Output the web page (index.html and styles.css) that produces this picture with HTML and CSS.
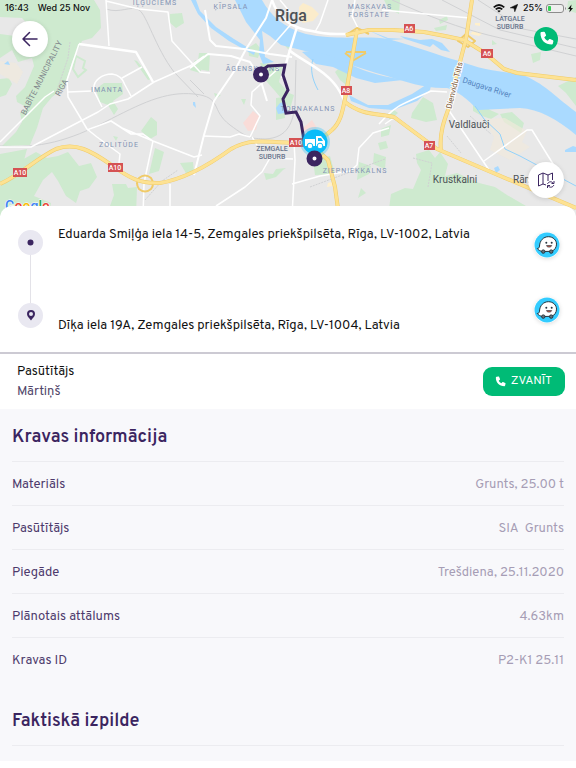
FILE: index.html
```html
<!DOCTYPE html>
<html lang="lv">
<head>
<meta charset="utf-8">
<meta name="viewport" content="width=device-width, initial-scale=1">
<title>Kravas informācija</title>
<link rel="stylesheet" href="styles.css">
</head>
<body>
<svg class="defs" aria-hidden="true">
  <symbol id="phone" viewBox="0 0 24 24"><path d="M5.200 1.600 8.800 1c.7-.1 1.200.2 1.500.8l1.700 4.200c.2.600.1 1.100-.4 1.500L9.400 9.300c1.200 2.500 3 4.300 5.400 5.400l1.800-2.200c.4-.5.9-.6 1.500-.4l4.200 1.800c.6.300.9.800.8 1.400l-.9 3.900c-.2.700-.6 1.100-1.300 1.100C10.300 20.300 3.700 13.500 3.700 3c0-.8.700-1.200 1.500-1.400Z"/></symbol>
  <symbol id="waze" viewBox="0 0 26 26">
    <circle cx="13" cy="13" r="12.500" fill="#33ccff"/>
    <path d="M8.500 19.500c-2.300-.4-4.200-1.400-5.300-3 1.700-.1 2.200-.9 2.300-2.400C5.700 8.500 9.600 4.700 14.400 4.700c4.800 0 8.100 3.500 8.100 7.400 0 3.200-1.800 5.900-4.500 7.200Z" fill="#fff" stroke="#263640" stroke-width="1"/>
    <circle cx="12.300" cy="10.700" r="1" fill="#263640"/><circle cx="17.700" cy="10.700" r="1" fill="#263640"/>
    <path d="M12.500 13.600c.5 2 4.500 2 5.200 0Z" fill="#e0604c" stroke="#263640" stroke-width=".7"/>
    <circle cx="9.300" cy="19.600" r="1.700" fill="#66737b" stroke="#263640"/><circle cx="17.200" cy="19.600" r="1.700" fill="#66737b" stroke="#263640"/>
  </symbol>
</svg>

<header class="map">
  <svg class="map-canvas" viewBox="0 0 576 216" preserveAspectRatio="xMidYMid slice" role="img" aria-label="Riga">
    <rect width="576" height="216" fill="#e8e8e8"/>
    <g fill="#ceeacf">
      <path d="M0 0H94L100 10 101 28 92 38 82 41 72 62 64 88 52 97 43 108 37 128 30 145 2 146 16 132 22 122 20 113 28 108 17 102 16 96 25 87 34 66 32 58 18 62 12 50 0 58V34L15 36 30 27 22 18 0 17Z"/>
      <path d="M0 79 9 78 12 84 6 95 0 97ZM0 154 27 149 23 164 11 180 0 183ZM22 160 36 152 47 158 58 156 68 152 79 166 91 163 97 177 89 188 80 191 76 203 66 196 58 181 52 172 43 180 34 196 51 203 49 216 0 216V186L14 178ZM170 14 182 13 184 23 176 28 169 22ZM195 60 204 62 200 73 190 70ZM112 184 126 184 128 188 137 187 136 216 124 213 110 206 114 195ZM155 148 164 152 159 171 149 174ZM180 163 193 162 194 172 187 175ZM199 53 210 53 209 71 197 69ZM96 89 104 83 122 83 123 94 113 101 118 109 114 115 108 105 100 102ZM113 136 118 137 116 141ZM134 60 137 61 152 79 148 80ZM141 131 151 117 157 122 157 135 150 139Z"/>
      <path d="M260 63 283 65 279 82 289 93 294 95 290 109 275 91 267 82ZM276 98 283 97 285 118 276 120ZM248 48 256 43 261 49 258 58 249 56ZM340 67 347 68 351 89 340 80 335 72ZM313 160 330 156 335 174 315 175ZM359 162 371 166 369 174 357 180ZM374 153 386 157 385 169 373 164ZM381 129 391 125 389 135 381 137ZM286 168 276 169 273 174 264 173 266 180 276 177 283 170ZM384 0 400 0 399 14 388 8ZM278 38 283 35 292 46 288 49ZM241 99 246 99 244 105ZM361 188 366 193 358 198ZM214 93 221 95 216 99Z"/>
      <path d="M412 113 423 97 433 103 437 120 426 122 411 118ZM416 154 429 150 435 158 440 152 448 164 445 176 457 173 479 183 495 187 507 195 526 206 520 216 388 216 391 194 405 188 413 189 421 170 417 163ZM387 114 394 110 398 113 390 120ZM378 143 386 141 388 148 380 150ZM473 102 480 108 484 104 490 110 499 114 491 119 482 116 473 111ZM500 114 512 112 524 123 521 133 504 122ZM558 86 576 77 576 106 566 93ZM531 54 541 52 540 60 533 63ZM434 28 447 25 446 30 436 31ZM439 20 447 16 448 20 440 24ZM492 40 497 44 492 45ZM568 1 576 0 576 13 567 10Z"/>
    </g>
    <path d="M76 56 85 61 83 68 86 70 78 77 73 69Z" fill="none" stroke="#ceeacf" stroke-width="2"/>
    <g fill="#f1eadb" opacity=".65"><path d="M0 61 16 63 23 72 17 84 0 74ZM483 119 505 118 527 131 522 142 530 147 510 160 490 150 494 137Z"/></g>
    <path d="M299 7 303 3 312 7 319 14 313 21 303 23 299 18Z" fill="#fbeccb"/>
    <path d="m243 123 10-12 6 5-3 14-8 1Zm59 6 10-9 5 8-10 9Z" fill="#f9dcd8"/>
    <path d="m328 183 3-1 2 4-6 1ZM473 31l10 2-4 3-9-2Zm2-8 5 0 0 3-5-1Z" fill="#fff0cc"/>
    <g fill="#aadaff">
      <path d="M235 0H262C270 15 284 28 306 34 340 41 364 35 388 39 418 47 437 55 459 61 480 69 499 72 521 74 545 84 552 94 576 112V135C557 119 539 109 520 108L478 110C467 99 458 91 447 88 427 89 406 82 387 76 355 67 332 58 309 52L281 45 270 36 262 31 265 57 274 62 263 64 259 54 260 40 246 22Z"/>
      <path d="M302 52C322 49 342 62 363 70 390 80 419 81 432 82L430 90 417 101 393 110 369 108 351 101 349 95 368 105 388 105 412 94 429 83 403 80 375 83 356 78 333 67 316 64Z"/>
      <path d="m370 31 18 7 17 1-5-3 20 4 12-1 10 4 8 9-9-2-8-6-3 3-25-8-16 1-15-7ZM280 103l4-1 1 11-7 1-2-6ZM191 0h5l4 11 16 16 18 12 21 13-1 3-25-14-18-13-13-14ZM4 64l4-3 2 4ZM518 79l5-2 0 4ZM565 150l8-4 3 1v5l-11 0ZM494 168l4-2 2 4-4 3ZM193 102l2 0 1 6-3-3Z"/>
    </g>
    <g fill="none" stroke="#d0d1d3" stroke-width="1">
      <path d="M0 146C40 149 70 140 105 122S165 91 194 94 210 110 230 125 252 138 265 139C288 138 293 122 295 105L296 60"/>
      <path d="M106 9C120 14 131 5 139 10S155 47 174 72L198 97M392 0C430 17 460 28 488 35L576 56M442 0 500 30 576 48M190 80 204 94M478 0 523 29 576 39"/>
      <path d="M70 42 68 58 56 93M310 187 385 159M145 200 162 181 178 170M447 136 461 153M470 116 491 134M428 187 432 163 413 158" stroke-dasharray="2 1"/>
    </g>
    <g fill="none" stroke="#92d2fb" stroke-width="1"><path d="m475 106 9 13 16 15 5 15 15 7 56 30M313 59c-3 10-1 20 5 31"/></g>
    <g fill="none" stroke="#fff" stroke-width="1.500" stroke-linejoin="round">
      <path d="M0 142 45 97 54 91M0 147H31L98 112 110 104 128 99 154 82 190 66 204 56"/>
      <path d="M106 0 109 46M106 1 139 9 168 12 172 41 200 72 210 73"/>
      <path d="m79 44 57 8 17 30" stroke-width="2.500"/>
      <path d="M79 44 67 80 68 97 80 117 87 129 97 137 120 154 119 163M68 92 92 91M102 107 94 91C92 80 103 74 112 74 120 75 123 79 125 85L131 96M122 78l20-11M87 130 111 121 122 128 153 141 194 157 202 155M111 121 131 134 143 134 153 141 144 183 143 216M170 184V216"/>
      <path d="M190 68 208 54 231 56 250 62 260 78 267 101M205 10 210 40 216 46 244 49 270 54 292 57M272 0 266 18 246 49 235 70 214 101 204 135 194 175" stroke-width="2"/>
      <path d="M203 136 230 137 239 134 250 137 260 116 251 105 252 92 279 68M252 137 257 145M294 142 295 160 292 216M216 206 245 187 262 172 270 158 293 159M292 184 320 176 350 171 357 165 359 148 373 133 389 128"/>
      <path d="M297 27 289 53 282 78" stroke-width="2.500"/>
      <path d="M272 0C278 19 294 29 312 31 330 36 345 34 355 33M289 50C300 60 328 70 340 92L346 104" stroke-width="2.500"/>
      <path d="M328 0 320 23 315 32M355 0 352 16 358 28M280 0 290 12M382 10 470 18"/>
      <path d="M379 124C386 116 395 107 405 103L431 91 447 92M385 124 395 117M448 109 491 173M484 161 527 130 532 130 558 172M293 22 265 54"/>
    </g>
    <g fill="none" stroke="#f0cb69" stroke-width="4" stroke-linejoin="round">
      <path d="M0 184C20 175 37 158 56 149 76 142 91 151 110 164 129 178 140 184 160 183 185 179 209 165 231 149 248 139 264 141 292 143M310 148 332 130C342 121 343 107 345 99L357 30M345 102C363 116 376 113 394 117L437 149 491 172 576 208M313 146 328 160 335 187 339 216M346 35 369 30 393 30 424 32 445 36 464 40 485 53 504 69 517 73 576 80M472 0 466 39 456 77 450 105C444 120 439 134 441 151"/>
      <path d="M139 178q6-5 12 0 4 6 0 11-6 5-12 0-4-6 0-11Zm207-143 11-7 12 6m-24 19 9 7 12-7M346 52h20M458 41l8-7 9 7-7 6Z" stroke-width="2"/>
    </g>
    <path d="M0 184C20 175 37 158 56 149 76 142 91 151 110 164 129 178 140 184 160 183 185 179 209 165 231 149 248 139 264 141 292 143M310 148 332 130C342 121 343 107 345 99L357 30M345 102C363 116 376 113 394 117L437 149 491 172 576 208M313 146 328 160 335 187 339 216M346 35 369 30 393 30 424 32 445 36 464 40 485 53 504 69 517 73 576 80M472 0 466 39 456 77 450 105C444 120 439 134 441 151" fill="none" stroke="#fde293" stroke-width="3"/>

    <g class="district">
      <text x="155" y="5">IĻĢUCIEMS</text><text x="231" y="9">ĶĪPSALA</text>
      <text x="370" y="9">MASKAVAS</text><text x="369" y="17">FORŠTATE</text>
      <text x="107" y="92">IMANTA</text><text x="119" y="147">ZOLITŪDE</text>
      <text x="253" y="71">ĀGENSKALNS</text><text x="308" y="111">TORNAKALNS</text>
      <text x="355" y="173">ZIEPNIEKKALNS</text>
    </g>
    <g class="suburb">
      <text x="272" y="151">ZEMGALE</text><text x="272" y="159">SUBURB</text>
      <text x="510" y="21">LATGALE</text><text x="510" y="29">SUBURB</text>
    </g>
    <g class="town">
      <text x="291" y="21" class="city">Riga</text>
      <text x="469" y="128">Valdlauči</text><text x="455" y="183">Krustkalni</text><text x="531" y="183">Rāmava</text>
    </g>
    <g class="border-label">
      <text transform="translate(44 79) rotate(-63)">BABĪTE MUNICIPALITY</text>
      <text transform="translate(64 89) rotate(-62)">RIGA</text>
    </g>
    <text class="bridge" transform="translate(457 86) rotate(-76)">Dienvidu Tilts</text>
    <text class="river" transform="translate(486 90) rotate(18)">Daugava River</text>
    <g fill="#d55253">
      <rect x="13" y="168" width="14" height="9"/><rect x="108" y="163" width="15" height="9"/><rect x="289" y="138" width="15" height="9"/><rect x="341" y="86" width="11" height="9"/><rect x="404" y="24" width="11" height="9"/><rect x="481" y="49" width="12" height="9"/><rect x="424" y="141" width="11" height="9"/>
    </g>
    <g class="shield">
      <text x="20" y="175">A10</text><text x="115" y="170">A10</text><text x="296" y="145">A10</text><text x="346" y="93">A8</text><text x="409" y="31">A6</text><text x="487" y="56">A6</text><text x="429" y="148">A7</text>
    </g>
    <path d="M261 71 268 66 285 65 283 75 288 90 283 99 286 113 296 112 301 122 304 140 314 158" fill="none" stroke="#3b2560" stroke-width="3"/>
    <circle cx="315" cy="142" r="15" fill="#14bdf8" opacity=".3"/><circle cx="315" cy="142" r="12.500" fill="#0abcf9"/>
    <path d="M305 139h10v7h-10ZM316 136h5l4 5v5h-9Z" fill="#fff"/><path d="M318 138h3l2 3h-5Z" fill="#0abcf9"/>
    <g fill="#fff" stroke="#0abcf9"><circle cx="310" cy="146" r="2.800"/><circle cx="320" cy="146" r="2.800"/></g>
    <g fill="#fff" stroke="#3b2560" stroke-width="6"><circle cx="261" cy="74.500" r="5"/><circle cx="314.500" cy="158.500" r="5"/></g>
    <text class="google" x="5" y="211"><tspan fill="#4285f4">G</tspan><tspan fill="#ea4335">o</tspan><tspan fill="#fbbc05">o</tspan><tspan fill="#4285f4">g</tspan><tspan fill="#34a853">l</tspan><tspan fill="#ea4335">e</tspan></text>
  </svg>

  <div class="overlay">
    <div class="status">
      <div class="status-group time"><span>16:43</span><span>Wed 25 Nov</span></div>
      <div class="status-group">
        <svg width="12" height="9" viewBox="0 0 12 9" fill="none" stroke="#111" stroke-width="1.700"><path d="M.7 3.300Q6-1.300 11.300 3.300M2.700 5.400Q6 2.600 9.300 5.400"/><path d="M6 8.600 4.200 6.800Q6 5.500 7.800 6.800Z" fill="#111" stroke="none"/></svg>
        <svg class="locate" width="8" height="8" viewBox="0 0 8 8"><path d="M7.800.2 4.800 7.800 4 4.200.2 3.800Z" fill="#111" stroke="#111" stroke-width=".5"/></svg>
        <span>25%</span>
        <svg width="21" height="9" viewBox="0 0 21 9"><rect x=".5" y=".5" width="17" height="8" rx="2.500" fill="#eee" stroke="#8c8c8c"/><path d="M2.500 2.500h2v4h-2Z" fill="#35d158" stroke="#35d158"/><path d="M19 3q2 1.500 0 3Z" fill="#8c8c8c"/></svg>
        <svg class="bolt" width="5" height="9" viewBox="0 0 5 9"><path d="M3.500.5 0 5h2l-.7 3.500L5 4H3Z" fill="#111"/></svg>
      </div>
    </div>
    <div class="map-row">
      <button class="round" type="button" aria-label="Atpakaļ"><svg width="16" height="16" viewBox="0 0 16 16" fill="none" stroke="#3b2560" stroke-width="1.500" stroke-linecap="round" stroke-linejoin="round"><path d="M15 8H1M7.500 1.500 1 8l6.500 6.500"/></svg></button>
      <button class="call-dot" type="button" aria-label="Zvanīt"><svg width="16" height="16" fill="#fff"><use href="#phone"/></svg></button>
    </div>
    <div class="map-row map-bottom">
      <button class="round" type="button" aria-label="Karte"><svg width="18" height="17" viewBox="0 0 18 17" fill="none" stroke="#3b2560" stroke-linejoin="round"><path d="M9 13 6 12 1.500 14V3L6 1l5 2 4.500-2v7M6 1v11M11 3v6"/><path d="M10.500 12c.7-2.500 4.300-3 5.700-.8M17 9v2.500h-2.500M16.800 13c-.7 2.500-4.300 3-5.700.8M10.500 16v-2.500H13"/></svg></button>
    </div>
  </div>
</header>

<main>
  <section class="route">
    <div class="rail" aria-hidden="true">
      <span class="stop"><svg width="7" height="7" viewBox="0 0 7 7"><circle cx="3.500" cy="3.500" r="3" fill="#3b2560"/></svg></span>
      <span class="track"></span>
      <span class="stop"><svg width="8" height="11" viewBox="0 0 8 11"><path d="M4 0a4 4 0 0 1 4 4c0 2.800-2.800 4.500-4 6.500C2.800 8.500 0 6.800 0 4a4 4 0 0 1 4-4Zm0 2a2 2 0 1 0 0 4 2 2 0 0 0 0-4Z" fill="#3b2560"/></svg></span>
    </div>
    <div class="addresses">
      <p>Eduarda Smiļģa iela 14-5, Zemgales priekšpilsēta, Rīga, LV-1002, Latvia</p>
      <p>Dīķa iela 19A, Zemgales priekšpilsēta, Rīga, LV-1004, Latvia</p>
    </div>
    <div class="waze-links">
      <button class="waze" type="button" aria-label="Waze"><svg width="26" height="26"><use href="#waze"/></svg></button>
      <button class="waze" type="button" aria-label="Waze"><svg width="26" height="26"><use href="#waze"/></svg></button>
    </div>
  </section>

  <section class="contact">
    <div>
      <p class="role">Pasūtītājs</p>
      <p class="name">Mārtiņš</p>
    </div>
    <button class="call" type="button"><svg width="12" height="12" fill="#fff"><use href="#phone"/></svg>ZVANĪT</button>
  </section>

  <section class="details">
    <h2>Kravas informācija</h2>
    <dl>
      <div><dt>Materiāls</dt><dd>Grunts, 25.00 t</dd></div>
      <div><dt>Pasūtītājs</dt><dd>SIA&nbsp; Grunts</dd></div>
      <div><dt>Piegāde</dt><dd>Trešdiena, 25.11.2020</dd></div>
      <div><dt>Plānotais attālums</dt><dd>4.63km</dd></div>
      <div><dt>Kravas ID</dt><dd>P2-K1 25.11</dd></div>
    </dl>
    <h2 class="actual">Faktiskā izpilde</h2>
  </section>
</main>
</body>
</html>
```
FILE: styles.css
```css
* { box-sizing: border-box; }
body { margin: 0; background: #fff; color: #111; font: 13px/20px Overpass, Inter, sans-serif; }
p, h2, dl, dd { margin: 0; }
button { display: flex; align-items: center; justify-content: center; padding: 0; border: 0; font: inherit; cursor: pointer; }
svg { display: block; flex: none; }
.defs { position: absolute; width: 0; height: 0; }

.map { position: relative; height: 218px; overflow: hidden; }
.map-canvas { width: 100%; height: 216px; }
.map-canvas text { font-family: Roboto, sans-serif; }
.district { fill: #8292b4; font-size: 7px; letter-spacing: 1px; text-anchor: middle; }
.suburb { fill: #68758c; font-size: 7px; font-weight: 500; text-anchor: middle; }
.town { fill: #4d5256; font-size: 10px; text-anchor: middle; }
.city { font-size: 16px; font-weight: 500; }
.border-label { fill: #80868b; font-size: 8px; text-anchor: middle; }
.bridge { fill: #7b5a38; font-size: 8px; text-anchor: middle; stroke: #fff; stroke-width: 2px; paint-order: stroke; }
.river { fill: #5484c0; font-size: 8px; text-anchor: middle; }
.shield { fill: #fff; font-size: 7px; font-weight: 500; text-anchor: middle; }
.google { font-size: 14px; font-weight: 500; stroke: #fff; stroke-width: 1px; paint-order: stroke; }

.overlay { position: absolute; inset: 0; display: flex; flex-direction: column; padding-bottom: 20px; }
.status { display: flex; justify-content: space-between; padding: 0 3px 0 5px; font: 500 9px/16px Inter, sans-serif; }
.status-group { display: flex; align-items: center; gap: 3px; }
.time { gap: 9px; }
.locate { margin: 0 2px; }
.bolt { margin-left: -2px; }
.map-row { display: flex; align-items: center; justify-content: space-between; padding: 5px 18px 0 12px; }
.map-bottom { justify-content: flex-end; margin-top: auto; padding: 0 12px 0 0; }
.round { width: 36px; height: 36px; border-radius: 50%; background: #fff; box-shadow: 0 1px 5px #0002; }
.call-dot { width: 24px; height: 24px; border-radius: 50%; background: #00bb76; }

.route { position: relative; display: flex; align-items: center; margin-top: -12px; padding: 18px 16px 16px 18px; border-bottom: 2px solid #cccad3; border-radius: 12px 12px 0 0; background: #fff; }
.rail { display: flex; flex-direction: column; align-items: center; height: 100px; padding-bottom: 2px; }
.stop { display: flex; align-items: center; justify-content: center; width: 25px; height: 25px; border-radius: 50%; background: #e9e8f1; }
.track { flex: 1; width: 1px; background: #e3e2e8; }
.addresses { display: flex; flex: 1; flex-direction: column; justify-content: space-between; min-height: 112px; padding: 1px 15px 0; }
.waze-links { display: flex; flex-direction: column; justify-content: space-between; height: 97px; padding-bottom: 6px; }
.waze { border-radius: 50%; background: none; box-shadow: 0 1px 4px #0002; }

.contact { display: flex; align-items: flex-start; justify-content: space-between; padding: 8px 11px 7px 17px; }
.name { color: #51466a; }
.call { gap: 5px; margin-top: 5px; padding: 5px 13px 5px 11px; border-radius: 9px; background: #00bb76; color: #fff; font-size: 12px; line-height: 19px; }

.details { padding: 0 12px 15px; background: #f8f8fb; }
h2 { padding: 17px 0 11px; border-bottom: 1px solid #ececf0; color: #3b2560; font-size: 18px; line-height: 24px; font-weight: 600; }
dl div { display: flex; justify-content: space-between; gap: 16px; padding: 13px 0 10px; border-bottom: 1px solid #ececf0; }
dl div:last-child { border-bottom: 0; }
dt { color: #4d3a6c; }
dd { color: #a69db5; text-align: right; }
.actual { padding-top: 29px; }
```
